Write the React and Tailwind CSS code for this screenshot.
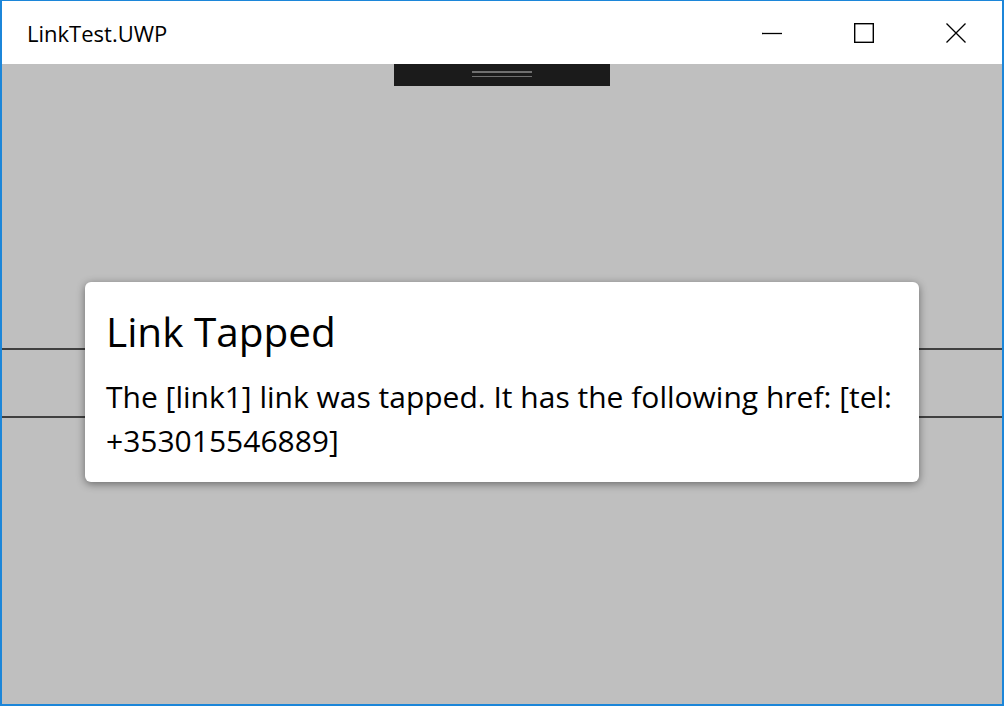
import React from "react";

export default function App() {
  return (
    <div className="w-[1004px] h-[706px] bg-[#1c86d9] pt-[1px] px-[2px] pb-[2px] overflow-hidden" style={{ fontFamily: '"Open Sans", "Noto Sans", sans-serif' }}>
      <div className="w-full h-full flex flex-col bg-[#bfbfbf]">
        <div className="h-[63px] bg-white flex items-center shrink-0">
          <div className="pl-[25px] text-[22px] text-black flex-1 leading-none">LinkTest.UWP</div>
          <div className="flex h-full">
            <div className="w-[92px] h-full flex items-center justify-center">
              <svg width="20" height="20" viewBox="0 0 20 20"><line x1="0" y1="10.5" x2="20" y2="10.5" stroke="#000" strokeWidth="1.3" /></svg>
            </div>
            <div className="w-[92px] h-full flex items-center justify-center">
              <svg width="20" height="20" viewBox="0 0 20 20"><rect x="0.7" y="0.7" width="18.6" height="18.6" fill="none" stroke="#000" strokeWidth="1.4" /></svg>
            </div>
            <div className="w-[92px] h-full flex items-center justify-center">
              <svg width="20" height="20" viewBox="0 0 20 20"><path d="M0.5 0.5 L19.5 19.5 M19.5 0.5 L0.5 19.5" stroke="#000" strokeWidth="1.3" /></svg>
            </div>
          </div>
        </div>
        <div className="relative flex-1 flex flex-col items-center">
          <div className="w-[216px] h-[22px] bg-[#1b1b1b] flex flex-col items-center pt-[7px] gap-[3px]">
            <div className="w-[60px] h-[1.5px] bg-[#707070]" />
            <div className="w-[60px] h-[1.5px] bg-[#707070]" />
          </div>
          <div className="mt-[262px] w-full h-[2px] bg-[#404040]" />
          <div className="mt-[66px] w-full h-[2px] bg-[#404040]" />
          <div className="absolute inset-0 flex items-center justify-center pb-[4px]">
            <div className="w-[834px] h-[200px] bg-white rounded-[6px] shadow-[0_2px_8px_rgba(0,0,0,0.45)] px-[21px] pt-[22px] text-black">
              <div className="text-[40.5px] leading-[56px]">Link Tapped</div>
              <div className="text-[30px] leading-[44px] mt-[15px] whitespace-nowrap">
                The [link1] link was tapped. It has the following href: [tel:<br />+353015546889]
              </div>
            </div>
          </div>
        </div>
      </div>
    </div>
  );
}
